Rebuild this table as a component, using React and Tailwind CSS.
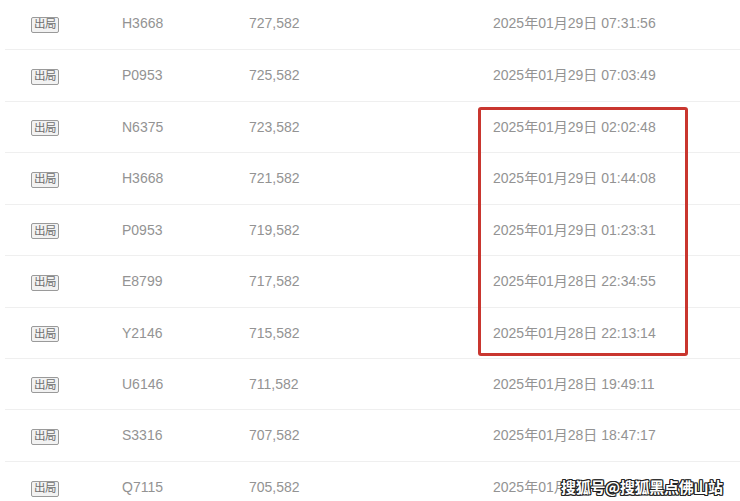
import React from 'react';

const rows = [
  { id: 'H3668', num: '727,582', date: '2025年01月29日 07:31:56', h: 'h-[50px]', first: true },
  { id: 'P0953', num: '725,582', date: '2025年01月29日 07:03:49', h: 'h-[52px]' },
  { id: 'N6375', num: '723,582', date: '2025年01月29日 02:02:48', h: 'h-[51px]' },
  { id: 'H3668', num: '721,582', date: '2025年01月29日 01:44:08', h: 'h-[52px]' },
  { id: 'P0953', num: '719,582', date: '2025年01月29日 01:23:31', h: 'h-[51px]' },
  { id: 'E8799', num: '717,582', date: '2025年01月28日 22:34:55', h: 'h-[52px]' },
  { id: 'Y2146', num: '715,582', date: '2025年01月28日 22:13:14', h: 'h-[51px]' },
  { id: 'U6146', num: '711,582', date: '2025年01月28日 19:49:11', h: 'h-[51px]' },
  { id: 'S3316', num: '707,582', date: '2025年01月28日 18:47:17', h: 'h-[52px]' },
  { id: 'Q7115', num: '705,582', date: '2025年01月', h: 'h-[51px]', last: true },
];

function Badge() {
  return (
    <span className="inline-flex items-center justify-center w-[28px] h-[16px] border border-[#9a9a9a] bg-[#f2f2f2] rounded-[2px] text-[11.5px] leading-none text-[#6f6f6f] tracking-[-0.5px]">
      出局
    </span>
  );
}

export default function App() {
  return (
    <div
      className="relative w-[740px] h-[501px] overflow-hidden bg-white text-[14px] text-[#939393]"
      style={{ fontFamily: '"Liberation Sans", "Noto Sans CJK SC", sans-serif' }}
    >
      <ul>
        {rows.map((r, i) => (
          <li
            key={i}
            className={`${r.h} ml-[5px] flex items-center ${r.last ? '' : 'border-b border-[#efefef]'} ${r.first ? 'pb-[2px]' : ''}`}
          >
            <div className="w-[117px] pl-[26px]">
              <Badge />
            </div>
            <div className="w-[127px]">{r.id}</div>
            <div className="w-[244px]">{r.num}</div>
            <div>{r.date}</div>
          </li>
        ))}
      </ul>

      {/* highlight box */}
      <div className="absolute left-[478px] top-[107px] w-[210px] h-[249px] border-[3px] border-[#c9362f] rounded-[3px]" />

      {/* watermark */}
      <div
        className="absolute left-[561px] top-[476px] text-[15px] font-bold text-white tracking-[-0.3px]"
        style={{
          fontFamily: '"Noto Sans CJK SC", sans-serif',
          textShadow:
            '1px 0 0 #222, -1px 0 0 #222, 0 1px 0 #222, 0 -1px 0 #222, 1px 1px 0 #222, -1px -1px 0 #222, 1px -1px 0 #222, -1px 1px 0 #222',
        }}
      >
        搜狐号@搜狐黑点佛山站
      </div>
    </div>
  );
}
